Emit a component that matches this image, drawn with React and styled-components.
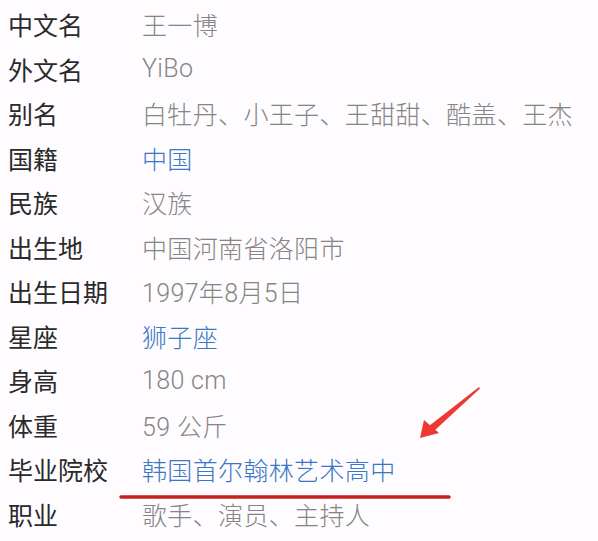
import React from "react";
import styled, { createGlobalStyle } from "styled-components";

const GlobalStyle = createGlobalStyle`
  html, body {
    margin: 0;
    padding: 0;
    background: #fefcfe;
  }
  body {
    font-family: Roboto, "Noto Sans CJK SC", sans-serif;
  }
`;

const Page = styled.div`
  position: relative;
  width: 598px;
  height: 541px;
  overflow: hidden;
  padding: 2px 0 0 8px;
  box-sizing: border-box;
`;

const Row = styled.div`
  display: flex;
  align-items: center;
  height: 44.5px;
  font-size: 25px;
`;

const Label = styled.div`
  width: 134px;
  flex-shrink: 0;
  color: #2a2a2a;
`;

const Value = styled.div`
  color: ${(p) => (p.$link ? "#3a78c6" : "#858585")};
  font-weight: 300;
  letter-spacing: 0.35px;
  white-space: nowrap;
`;

const Annotation = styled.svg`
  position: absolute;
  left: 0;
  top: 0;
  pointer-events: none;
`;

const rows = [
  ["中文名", "王一博"],
  ["外文名", "YiBo"],
  ["别名", "白牡丹、小王子、王甜甜、酷盖、王杰"],
  ["国籍", "中国", true],
  ["民族", "汉族"],
  ["出生地", "中国河南省洛阳市"],
  ["出生日期", "1997年8月5日"],
  ["星座", "狮子座", true],
  ["身高", "180 cm"],
  ["体重", "59 公斤"],
  ["毕业院校", "韩国首尔翰林艺术高中", true],
  ["职业", "歌手、演员、主持人"],
];

export default function App() {
  return (
    <>
      <GlobalStyle />
      <Page>
        {rows.map(([label, value, link]) => (
          <Row key={label}>
            <Label>{label}</Label>
            <Value $link={link}>{value}</Value>
          </Row>
        ))}
        <Annotation width="598" height="541">
          <line x1="121" y1="497" x2="449" y2="497" stroke="#c81f1c" strokeWidth="3.5" strokeLinecap="round" />
          <path d="M479 387 L480 388.5 L434 431 L429 426 Z" fill="#ec3a33" />
          <path d="M420 438 L424 420 L439 433 Z" fill="#ec3a33" />
        </Annotation>
      </Page>
    </>
  );
}
